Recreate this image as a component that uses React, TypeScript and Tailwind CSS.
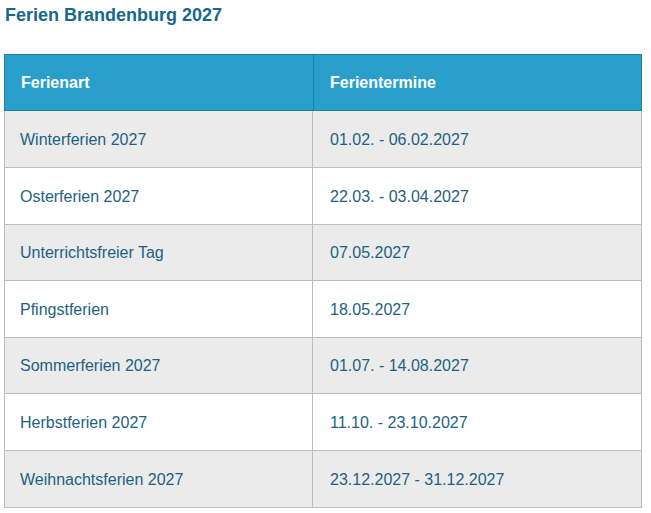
import React from 'react';

const rows: { name: string; dates: string; h: string }[] = [
  { name: 'Winterferien 2027', dates: '01.02. - 06.02.2027', h: 'h-[57px]' },
  { name: 'Osterferien 2027', dates: '22.03. - 03.04.2027', h: 'h-[57px]' },
  { name: 'Unterrichtsfreier Tag', dates: '07.05.2027', h: 'h-[56px]' },
  { name: 'Pfingstferien', dates: '18.05.2027', h: 'h-[57px]' },
  { name: 'Sommerferien 2027', dates: '01.07. - 14.08.2027', h: 'h-[56px]' },
  { name: 'Herbstferien 2027', dates: '11.10. - 23.10.2027', h: 'h-[57px]' },
  { name: 'Weihnachtsferien 2027', dates: '23.12.2027 - 31.12.2027', h: 'h-[57px]' },
];

const App: React.FC = () => {
  return (
    <div className="w-[651px] h-[513px] bg-white font-['Liberation_Sans',Arial,sans-serif] overflow-hidden">
      {/* Titel */}
      <h2 className="pl-[5px] pt-[5px] text-[18px] leading-[21px] font-bold text-[#17678a]">
        Ferien Brandenburg 2027
      </h2>

      {/* Tabelle */}
      <div className="ml-[4px] mt-[28px] w-[638px] border-l border-r border-[#bdbdbd] text-[16px]">
        <div className="flex h-[57px] box-border bg-[#2a9fcb] border-t border-b border-[#1b7fa8] -mx-px border-x text-white font-bold">
          <div className="w-[309px] flex items-center pl-[16px] border-r border-[#1b7fa8]">Ferienart</div>
          <div className="flex-1 flex items-center pl-[16px]">Ferientermine</div>
        </div>
        {rows.map((r, i) => (
          <div
            key={r.name}
            className={`flex ${r.h} box-border border-b border-[#bdbdbd] text-[#1d6282] ${
              i % 2 === 0 ? 'bg-[#ebebeb]' : 'bg-white'
            }`}
          >
            <div className="w-[308px] flex items-center pl-[15px] pt-px border-r border-[#bdbdbd]">{r.name}</div>
            <div className="flex-1 flex items-center pl-[17px] pt-px">{r.dates}</div>
          </div>
        ))}
      </div>
    </div>
  );
};

export default App;
